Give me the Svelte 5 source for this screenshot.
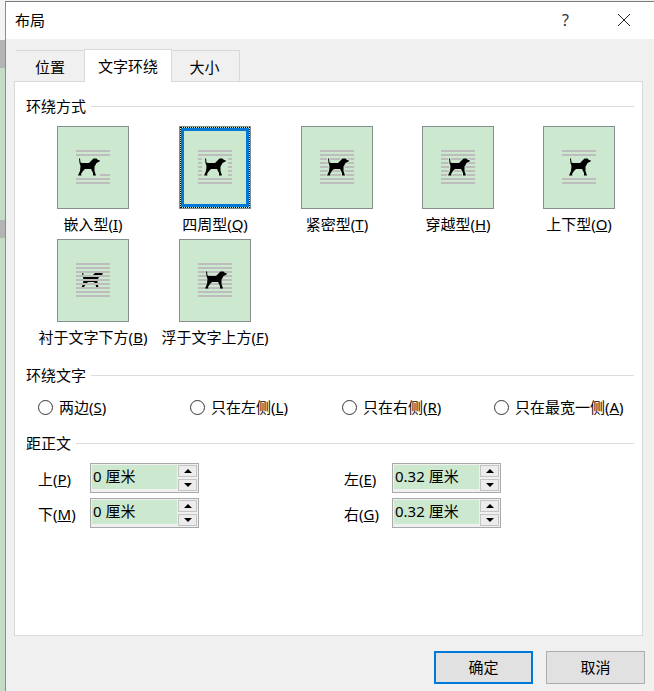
<script>
	const dogPath =
		'M1 .5L2 .5L2.5 4.5L4 5L11 5L13.5 2.5L15.5 .5L18.5 .5L20 2L22 2.5L21.5 3.5L18.5 5L17.5 7L16.5 8.5L16.5 13L18 17.5L15 17.5L15 15L13 11L7 11L5 13L3 16L3.5 17.5L0 17.5L2 13L2.5 8L1.5 5Z';

	const full = [24, 28, 32, 36, 40, 44, 48, 52, 56];

	const wraps = [
		{ key: 'inline', name: '嵌入型', hot: 'I', dx: 21, lines: [[19, 53, 24], [19, 53, 28], [43, 53, 48], [19, 53, 52], [19, 53, 56]] },
		{
			key: 'square',
			name: '四周型',
			hot: 'Q',
			dx: 25,
			selected: true,
			lines: [
				[19, 53, 24],
				[19, 53, 28],
				...[32, 36, 40, 44, 48].flatMap((y) => [
					[19, 23, y],
					[49, 53, y]
				]),
				[19, 53, 52],
				[19, 53, 56]
			]
		},
		{ key: 'tight', name: '紧密型', hot: 'T', dx: 26, halo: true, lines: full.map((y) => [19, 53, y]) },
		{ key: 'through', name: '穿越型', hot: 'H', dx: 26, halo: true, lines: full.map((y) => [19, 53, y]) },
		{ key: 'topbottom', name: '上下型', hot: 'O', dx: 26, lines: [[19, 53, 24], [19, 53, 28], [19, 53, 52], [19, 53, 56]] },
		{ key: 'behind', name: '衬于文字下方', hot: 'B', dx: 24, under: true, lines: full.map((y) => [19, 53, y]) },
		{ key: 'front', name: '浮于文字上方', hot: 'F', dx: 26, lines: full.map((y) => [19, 53, y]) }
	];

	const sides = [
		{ name: '两边', hot: 'S' },
		{ name: '只在左侧', hot: 'L' },
		{ name: '只在右侧', hot: 'R' },
		{ name: '只在最宽一侧', hot: 'A' }
	];

	const distances = [
		{ name: '上', hot: 'P', value: '0 厘米' },
		{ name: '左', hot: 'E', value: '0.32 厘米' },
		{ name: '下', hot: 'M', value: '0 厘米' },
		{ name: '右', hot: 'G', value: '0.32 厘米' }
	];
</script>

<div class="screen">
	<div class="backdrop">
		<div class="b1"></div>
		<div class="b2"></div>
		<div class="b3"></div>
		<div class="b2 short"></div>
		<div class="b3 grow"></div>
	</div>

	<div class="dialog">
		<header class="title">
			<span class="name">布局</span>
			<span class="help">?</span>
			<svg class="close" width="14" height="14" viewBox="0 0 14 14">
				<path d="M1 1L13 13M13 1L1 13" stroke="#222" stroke-width="1" fill="none" />
			</svg>
		</header>

		<div class="body">
			<div class="tabs">
				<div class="tab t1">位置</div>
				<div class="tab active">文字环绕</div>
				<div class="tab t3">大小</div>
			</div>

			<main class="panel">
				<div class="legend">环绕方式</div>
				<div class="wraps">
					{#each wraps as w (w.key)}
						<div class="cell">
							<div class="thumb" class:selected={w.selected}>
								<svg width="70" height="81" viewBox="1 1 70 81">
									{#if w.under}
										<path d={dogPath} transform="translate({w.dx} 32)" fill="#000" />
									{/if}
									{#each w.lines as [x1, x2, y]}
										<rect x={x1} {y} width={x2 - x1} height="2" fill="#bdbdbd" />
									{/each}
									{#if !w.under}
										<path
											d={dogPath}
											transform="translate({w.dx} 32)"
											fill="#000"
											stroke={w.halo ? '#cce8cf' : 'none'}
											stroke-width={w.halo ? 2 : 0}
											paint-order="stroke"
										/>
									{/if}
								</svg>
								{#if w.selected}<span class="focus"></span>{/if}
							</div>
							<div class="label">{w.name}(<u>{w.hot}</u>)</div>
						</div>
					{/each}
				</div>

				<div class="legend second">环绕文字</div>
				<div class="radios">
					{#each sides as s}
						<div class="radio"><span class="dot"></span>{s.name}(<u>{s.hot}</u>)</div>
					{/each}
				</div>

				<div class="legend third">距正文</div>
				<div class="distances">
					{#each distances as d}
						<div class="dlabel">{d.name}(<u>{d.hot}</u>)</div>
						<div class="spin">
							<div class="value">{d.value}</div>
							<div class="arrows">
								<div class="arrow"><i class="up"></i></div>
								<div class="arrow"><i class="down"></i></div>
							</div>
						</div>
					{/each}
				</div>
			</main>

			<footer class="actions">
				<button class="primary">确定</button>
				<button>取消</button>
			</footer>
		</div>
	</div>
</div>

<style>
	:global(body) {
		margin: 0;
		background: #f0f0f0;
	}
	.screen {
		display: flex;
		width: 654px;
		height: 691px;
		overflow: hidden;
		font-family: 'Noto Sans', 'Noto Sans CJK SC', sans-serif;
		font-size: 15px;
		line-height: 20px;
		color: #000;
	}
	.backdrop {
		width: 5px;
		display: flex;
		flex-direction: column;
		flex: none;
	}
	.b1 {
		height: 40px;
		background: #f3f3f3;
	}
	.b2 {
		height: 28px;
		background: #b4b4b4;
	}
	.b2.short {
		height: 18px;
	}
	.b3 {
		height: 152px;
		background: #c4dcc6;
	}
	.grow {
		flex: 1;
	}
	.dialog {
		flex: 1;
		display: flex;
		flex-direction: column;
		border-left: 1px solid #8c8c8c;
		border-top: 1px solid #7a7a7a;
		margin-top: 1px;
		background: #f0f0f0;
		min-width: 0;
	}
	.title {
		height: 37px;
		flex: none;
		background: #fff;
		display: flex;
		align-items: center;
		padding: 0 0 2px 9px;
		box-sizing: border-box;
		position: relative;
	}
	.name {
		flex: 1;
	}
	.help {
		font-size: 16px;
		color: #333;
		margin-right: 48px;
	}
	.close {
		margin-right: 23px;
	}
	.body {
		flex: 1;
		padding: 10px 0 0 8px;
	}
	.tabs {
		display: flex;
		align-items: flex-end;
		height: 33px;
		margin-left: 2px;
		position: relative;
		z-index: 1;
		margin-bottom: -1px;
	}
	.tab {
		box-sizing: border-box;
		height: 31px;
		margin-bottom: 1px;
		padding-top: 6px;
		text-align: center;
		border: 1px solid #d9d9d9;
		border-bottom: none;
		background: #f0f0f0;
	}
	.t1 {
		width: 68px;
		border-left: none;
		border-right: none;
	}
	.t3 {
		width: 68px;
		border-left: none;
		padding-right: 2px;
	}
	.active {
		width: 88px;
		height: 33px;
		margin-bottom: 0;
		background: #fff;
	}
	.panel {
		box-sizing: border-box;
		width: 629px;
		height: 555px;
		background: #fff;
		border: 1px solid #d9d9d9;
		padding: 14px 8px 0 11px;
	}
	.legend {
		display: flex;
		align-items: center;
		gap: 5px;
		height: 20px;
	}
	.legend::after {
		content: '';
		flex: 1;
		height: 1px;
		background: #dcdcdc;
	}
	.second {
		margin-top: 17px;
	}
	.third {
		margin-top: 16px;
	}
	.wraps {
		display: grid;
		grid-template-columns: 122px 122px 121px 121px 72px;
		row-gap: 4px;
		margin: 10px 0 0 31px;
	}
	.cell {
		width: 72px;
		height: 109px;
		display: flex;
		flex-direction: column;
		align-items: center;
	}
	.thumb {
		box-sizing: border-box;
		position: relative;
		width: 72px;
		height: 83px;
		border: 1px solid #868e8e;
		background: #cce8cf;
		flex: none;
	}
	.thumb svg {
		display: block;
	}
	.focus {
		position: absolute;
		inset: 0;
		border: 1px dotted #000;
		box-shadow: inset 0 0 0 3px #0078d7;
	}
	.label {
		margin-top: 5px;
		white-space: nowrap;
	}
	.radios {
		display: flex;
		margin: 12px 0 0 12px;
	}
	.radio {
		width: 152px;
		flex: none;
		display: flex;
		align-items: center;
		white-space: nowrap;
	}
	.dot {
		box-sizing: border-box;
		width: 15px;
		height: 15px;
		border: 1px solid #333;
		border-radius: 50%;
		background: #fff;
		margin-right: 6px;
		flex: none;
	}
	.distances {
		display: grid;
		grid-template-columns: 52px 109px 145px 48px 109px;
		grid-auto-rows: 30px;
		row-gap: 5px;
		margin: 10px 0 0 12px;
		align-items: center;
	}
	.distances .dlabel:nth-child(4n + 3) {
		grid-column: 4;
	}
	.distances .spin:nth-child(4n + 4) {
		grid-column: 5;
	}
	.dlabel {
		padding-top: 2px;
	}
	.spin {
		box-sizing: border-box;
		height: 30px;
		border: 1px solid #a9a9a9;
		background: #f0f0f0;
		display: flex;
		padding: 1px;
		gap: 1px;
	}
	.value {
		flex: none;
		width: 85px;
		height: 24px;
		line-height: 22px;
		background: #cce8cf;
		padding-left: 1px;
		box-sizing: border-box;
	}
	.arrows {
		flex: none;
		width: 19px;
		display: flex;
		flex-direction: column;
		gap: 2px;
	}
	.arrow {
		box-sizing: border-box;
		height: 12px;
		background: #ececec;
		border: 1px solid #c4c4c4;
		display: flex;
		align-items: center;
		justify-content: center;
	}
	.arrow i {
		width: 0;
		height: 0;
		border-left: 4px solid transparent;
		border-right: 4px solid transparent;
	}
	.up {
		border-bottom: 4px solid #000;
	}
	.down {
		border-top: 4px solid #000;
	}
	.actions {
		display: flex;
		justify-content: flex-end;
		gap: 13px;
		padding: 15px 9px 0 0;
	}
	button {
		box-sizing: border-box;
		width: 99px;
		height: 33px;
		font: inherit;
		color: inherit;
		background: #e1e1e1;
		border: 1px solid #adadad;
		padding: 0 0 2px;
	}
	.primary {
		border: 2px solid #0078d7;
	}
</style>
